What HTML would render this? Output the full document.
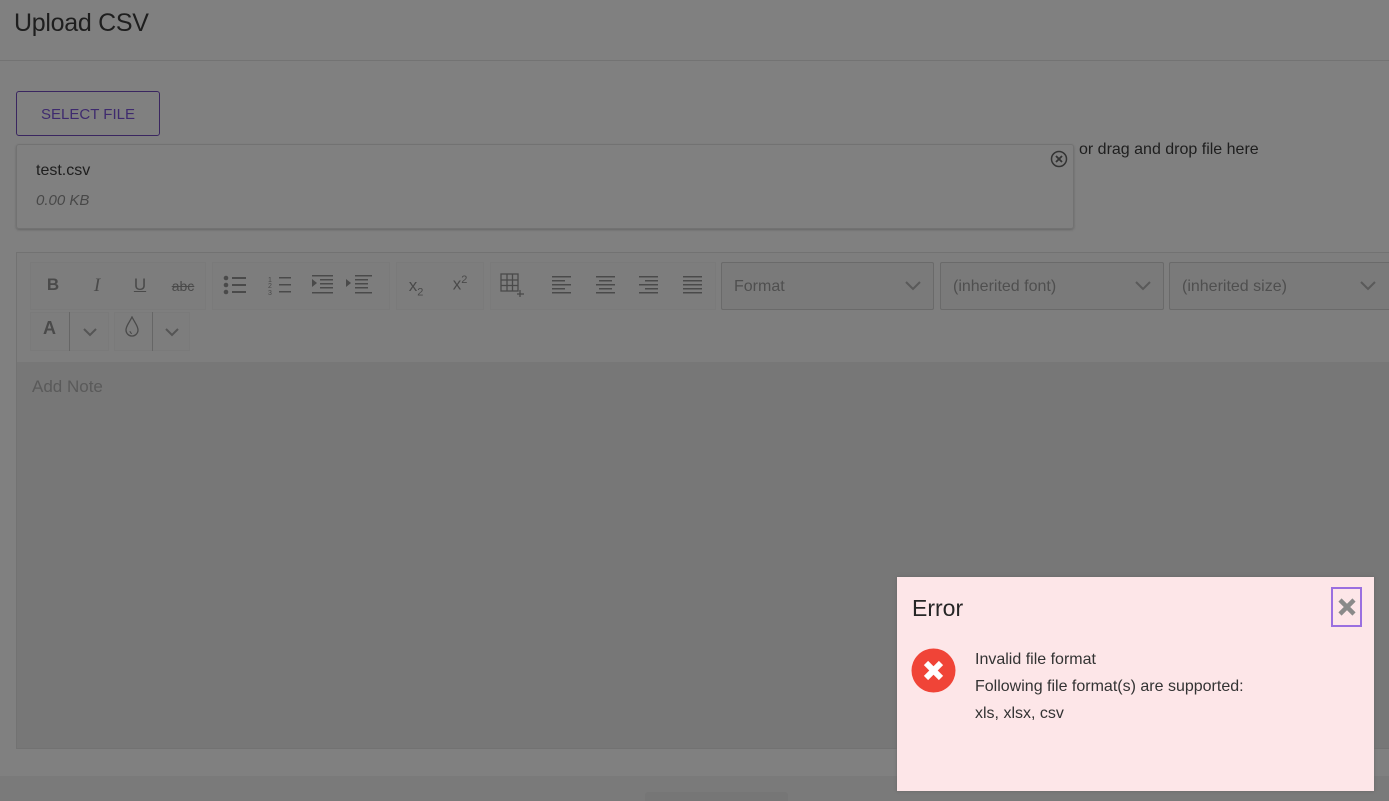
<!DOCTYPE html>
<html><head><style>
*{box-sizing:border-box;margin:0;padding:0}
body{width:1389px;height:801px;overflow:hidden;background:#808080;font-family:"Liberation Sans",sans-serif;color:#1e1e1e;position:relative}
.a{position:absolute}
.tb{position:absolute;top:262px;height:48px;background:#7d7d7d;border:1px solid #7a7a7a}
.ic{position:absolute;color:#4a4a4a;font-size:17px;text-align:center;width:40px}
.sel{position:absolute;top:262px;height:48px;background:#7a7a7a;border:1px solid #6a6a6a;border-radius:2px;color:#4f4f4f;font-size:16px;padding:15px 0 0 12px}
.sel svg{position:absolute;right:12px;top:18px}
</style></head><body>
<div class="a" style="left:14px;top:9px;font-size:25px;letter-spacing:-0.3px;color:#1e1e1e">Upload CSV</div>
<div class="a" style="left:0;top:60px;width:1389px;height:1px;background:#737373"></div>
<div class="a" style="left:16px;top:91px;width:144px;height:45px;border:1px solid #3a2660;border-radius:3px;color:#3e2a6e;font-size:15px;text-align:center;line-height:45px">SELECT FILE</div>
<div class="a" style="left:16px;top:144px;width:1058px;height:85px;border:1px solid #727272;border-radius:3px;box-shadow:0 1px 2px #666"></div>
<div class="a" style="left:36px;top:162px;font-size:16px">test.csv</div>
<div class="a" style="left:36px;top:192px;font-size:15px;font-style:italic;color:#484848">0.00 KB</div>
<svg class="a" style="left:1050px;top:150px" width="18" height="18" viewBox="0 0 18 18"><circle cx="9" cy="9" r="7.5" fill="none" stroke="#333" stroke-width="1.5"/><path d="M6 6l6 6M12 6l-6 6" stroke="#333" stroke-width="1.8"/></svg>
<div class="a" style="left:1079px;top:141px;font-size:16px;color:#1e1e1e">or drag and drop file here</div>
<div class="a" style="left:16px;top:252px;width:1380px;height:497px;border:1px solid #727272;background:#7e7e7e"></div>
<div class="tb" style="left:30px;width:176px"></div>
<div class="tb" style="left:212px;width:178px"></div>
<div class="tb" style="left:396px;width:88px"></div>
<div class="tb" style="left:490px;width:226px"></div>
<div class="ic" style="left:33px;top:275px;font-weight:bold">B</div>
<div class="ic" style="left:77px;top:275px;font-style:italic;font-family:'Liberation Serif',serif;font-size:19px">I</div>
<div class="ic" style="left:120px;top:275px;text-decoration:underline">U</div>
<div class="ic" style="left:163px;top:278px;font-size:14px;text-decoration:line-through">abc</div>
<svg class="a" style="left:222px;top:274px" width="150" height="22"><g fill="#4a4a4a"><circle cx="4" cy="4" r="2.3"/><circle cx="4" cy="11" r="2.3"/><circle cx="4" cy="18" r="2.3"/><rect x="10" y="3" width="14" height="2"/><rect x="10" y="10" width="14" height="2"/><rect x="10" y="17" width="14" height="2"/><rect x="57" y="3" width="12" height="1.5"/><rect x="57" y="10" width="12" height="1.5"/><rect x="57" y="17" width="12" height="1.5"/><rect x="90" y="1" width="21" height="1.5"/><rect x="98" y="5" width="13" height="1.5"/><rect x="98" y="9" width="13" height="1.5"/><rect x="98" y="13" width="13" height="1.5"/><rect x="90" y="18" width="21" height="1.5"/><path d="M90 5l5 4-5 4z"/><rect x="133" y="1" width="21" height="1.5"/><rect x="133" y="5" width="13" height="1.5"/><rect x="133" y="9" width="13" height="1.5"/><rect x="133" y="13" width="13" height="1.5"/><rect x="133" y="18" width="21" height="1.5"/><path d="M131 9l-5-4v8z" transform="translate(-2 0)"/></g><text x="46" y="8" font-size="7" fill="#4a4a4a">1</text><text x="46" y="14" font-size="7" fill="#4a4a4a">2</text><text x="46" y="21" font-size="7" fill="#4a4a4a">3</text></svg>
<div class="ic" style="left:396px;top:276px">x<sub style="font-size:11px">2</sub></div>
<div class="ic" style="left:440px;top:274px">x<sup style="font-size:11px">2</sup></div>
<svg class="a" style="left:500px;top:273px" width="24" height="24"><g fill="none" stroke="#4a4a4a" stroke-width="1.3"><rect x="1" y="1" width="17" height="17"/><path d="M7 1v17M12.5 1v17M1 7h17M1 12.5h17M20 17v7M17 21h7"/></g></svg>
<svg class="a" style="left:552px;top:275px" width="160" height="20"><g fill="#4a4a4a"><rect x="0" y="1" width="19" height="1.5"/><rect x="0" y="5" width="13" height="1.5"/><rect x="0" y="9" width="19" height="1.5"/><rect x="0" y="13" width="13" height="1.5"/><rect x="0" y="17" width="19" height="1.5"/><rect x="44" y="1" width="19" height="1.5"/><rect x="47" y="5" width="13" height="1.5"/><rect x="44" y="9" width="19" height="1.5"/><rect x="47" y="13" width="13" height="1.5"/><rect x="44" y="17" width="19" height="1.5"/><rect x="87" y="1" width="19" height="1.5"/><rect x="93" y="5" width="13" height="1.5"/><rect x="87" y="9" width="19" height="1.5"/><rect x="93" y="13" width="13" height="1.5"/><rect x="87" y="17" width="19" height="1.5"/><rect x="131" y="1" width="19" height="1.5"/><rect x="131" y="5" width="19" height="1.5"/><rect x="131" y="9" width="19" height="1.5"/><rect x="131" y="13" width="19" height="1.5"/><rect x="131" y="17" width="19" height="1.5"/></g></svg>
<div class="sel" style="left:721px;width:213px">Format<svg width="16" height="10"><path d="M1 1l7 7 7-7" fill="none" stroke="#5a5a5a" stroke-width="2"/></svg></div>
<div class="sel" style="left:940px;width:224px">(inherited font)<svg width="16" height="10"><path d="M1 1l7 7 7-7" fill="none" stroke="#5a5a5a" stroke-width="2"/></svg></div>
<div class="sel" style="left:1169px;width:230px">(inherited size)<svg style="right:22px" width="16" height="10"><path d="M1 1l7 7 7-7" fill="none" stroke="#5a5a5a" stroke-width="2"/></svg></div>
<div class="a" style="left:30px;top:312px;width:79px;height:39px;background:#7d7d7d;border:1px solid #7a7a7a"></div>
<div class="a" style="left:69px;top:312px;width:1px;height:39px;background:#666"></div>
<div class="a" style="left:114px;top:312px;width:76px;height:39px;background:#7d7d7d;border:1px solid #7a7a7a"></div>
<div class="a" style="left:152px;top:312px;width:1px;height:39px;background:#666"></div>
<div class="a" style="left:43px;top:318px;font-size:18px;font-weight:bold;color:#4a4a4a">A</div>
<svg class="a" style="left:82px;top:327px" width="16" height="10"><path d="M2 2l6 6 6-6" fill="none" stroke="#555" stroke-width="2"/></svg>
<svg class="a" style="left:164px;top:327px" width="16" height="10"><path d="M2 2l6 6 6-6" fill="none" stroke="#555" stroke-width="2"/></svg>
<svg class="a" style="left:123px;top:316px" width="18" height="22"><path d="M9 1C6 7 3 10 3 14a6 6 0 0 0 12 0C15 10 12 7 9 1z" fill="none" stroke="#4a4a4a" stroke-width="1.3"/><path d="M7 15q0 2 2 2.5" fill="none" stroke="#4a4a4a"/></svg>
<div class="a" style="left:17px;top:362px;width:1372px;height:386px;background:#777"></div>
<div class="a" style="left:32px;top:377px;font-size:17px;color:#5a5a5a">Add Note</div>
<div class="a" style="left:0;top:776px;width:1389px;height:25px;background:#7a7a7a"></div>
<div class="a" style="left:645px;top:792px;width:143px;height:9px;background:#767676;border-radius:3px 3px 0 0"></div>
<div class="a" style="left:897px;top:577px;width:477px;height:214px;background:#fde6e8;box-shadow:0 0 3px #666"></div>
<div class="a" style="left:912px;top:595px;font-size:23px;color:#262626">Error</div>
<div class="a" style="left:1331px;top:587px;width:31px;height:40px;border:2px solid #9a6fe0"></div>
<svg class="a" style="left:1337px;top:597px" width="20" height="20"><path d="M3 3l14 14M17 3L3 17" stroke="#8a8a8a" stroke-width="4.5"/></svg>
<svg class="a" style="left:911px;top:648px" width="45" height="45"><circle cx="22.5" cy="22.5" r="22" fill="#f04437"/><path d="M15 15l15 15M30 15L15 30" stroke="#fff" stroke-width="6"/></svg>
<div class="a" style="left:975px;top:646px;font-size:16px;color:#333;line-height:27px">Invalid file format<br>Following file format(s) are supported:<br>xls, xlsx, csv</div>
</body></html>
